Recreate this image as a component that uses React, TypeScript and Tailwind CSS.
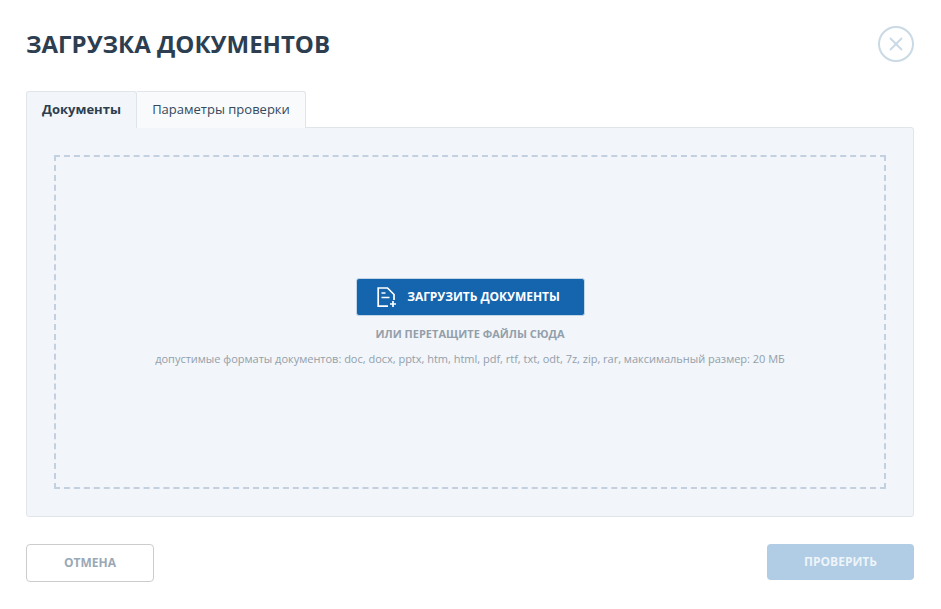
const font = "font-['Open_Sans',sans-serif]";

function FileAddIcon() {
  return (
    <svg width="20" height="21" viewBox="0 0 20 21" fill="none" stroke="#fff" strokeWidth="1.7" className="mr-[10px]">
      <path d="M17 13V7.500L10.500 1H1.200V19.200H11" />
      <path d="M4.500 6H8.500M4.500 10.500H12.500" />
      <path d="M16 14V20M13 17H19" />
    </svg>
  );
}

export default function App() {
  return (
    <div className={`${font} w-[941px] h-[609px] bg-white pl-[26px] pr-[27px] overflow-hidden`}>
      <div className="flex items-start justify-between pt-[26px] h-[91px]">
        <h1 className="text-[24px] leading-[36px] font-bold text-[#2c3e50]">ЗАГРУЗКА ДОКУМЕНТОВ</h1>
        <button className="w-9 h-9 rounded-full border-2 border-[#c9dae6] flex items-center justify-center">
          <svg width="16" height="16" viewBox="0 0 16 16" stroke="#c9dae6" strokeWidth="2" fill="none">
            <path d="M2 2l12 12M14 2L2 14" />
          </svg>
        </button>
      </div>

      <div className="flex relative z-10 h-[37px] text-[13px]">
        <div className="w-[111px] bg-[#f2f5f9] border border-b-0 border-[#e0e5e9] rounded-t-[3px] flex items-center justify-center font-bold text-[#2c3e50]">
          Документы
        </div>
        <div className="w-[169px] bg-[#f8fafb] border border-l-0 border-b-0 border-[#e0e5e9] rounded-tr-[3px] flex items-center justify-center text-[#34495e]">
          Параметры проверки
        </div>
      </div>

      <div className="h-[390px] -mt-px bg-[#f2f5f9] border border-[#e0e5e9] rounded-b-[3px] rounded-tr-[3px] pt-[27px] px-[27px]">
        <div className="h-[334px] border-2 border-dashed border-[#c3d0e0] flex flex-col items-center pt-[121px]">
          <button className="w-[229px] h-[38px] pr-[3px] bg-[#1464ae] border border-[#c3d6e6] rounded-[3px] flex items-center justify-center text-white text-[12px] tracking-[-0.04px] font-bold">
            <FileAddIcon />
            ЗАГРУЗИТЬ ДОКУМЕНТЫ
          </button>
          <p className="mt-[10px] text-[11px] leading-[16px] font-bold text-[#939fab]">ИЛИ ПЕРЕТАЩИТЕ ФАЙЛЫ СЮДА</p>
          <p className="mt-[9px] text-[11px] leading-[16px] tracking-[-0.012px] text-[#939fab]">
            допустимые форматы документов: doc, docx, pptx, htm, html, pdf, rtf, txt, odt, 7z, zip, rar, максимальный размер: 20 МБ
          </p>
        </div>
      </div>

      <div className="flex items-start justify-between mt-[27px]">
        <button className="w-[128px] h-[38px] bg-white border border-[#cccccc] rounded-[4px] text-[12px] font-bold text-[#9aa8b6]">
          ОТМЕНА
        </button>
        <button className="w-[147px] h-9 bg-[#b0cde5] rounded-[4px] text-[12px] font-bold text-[#eef4f9]">
          ПРОВЕРИТЬ
        </button>
      </div>
    </div>
  );
}
